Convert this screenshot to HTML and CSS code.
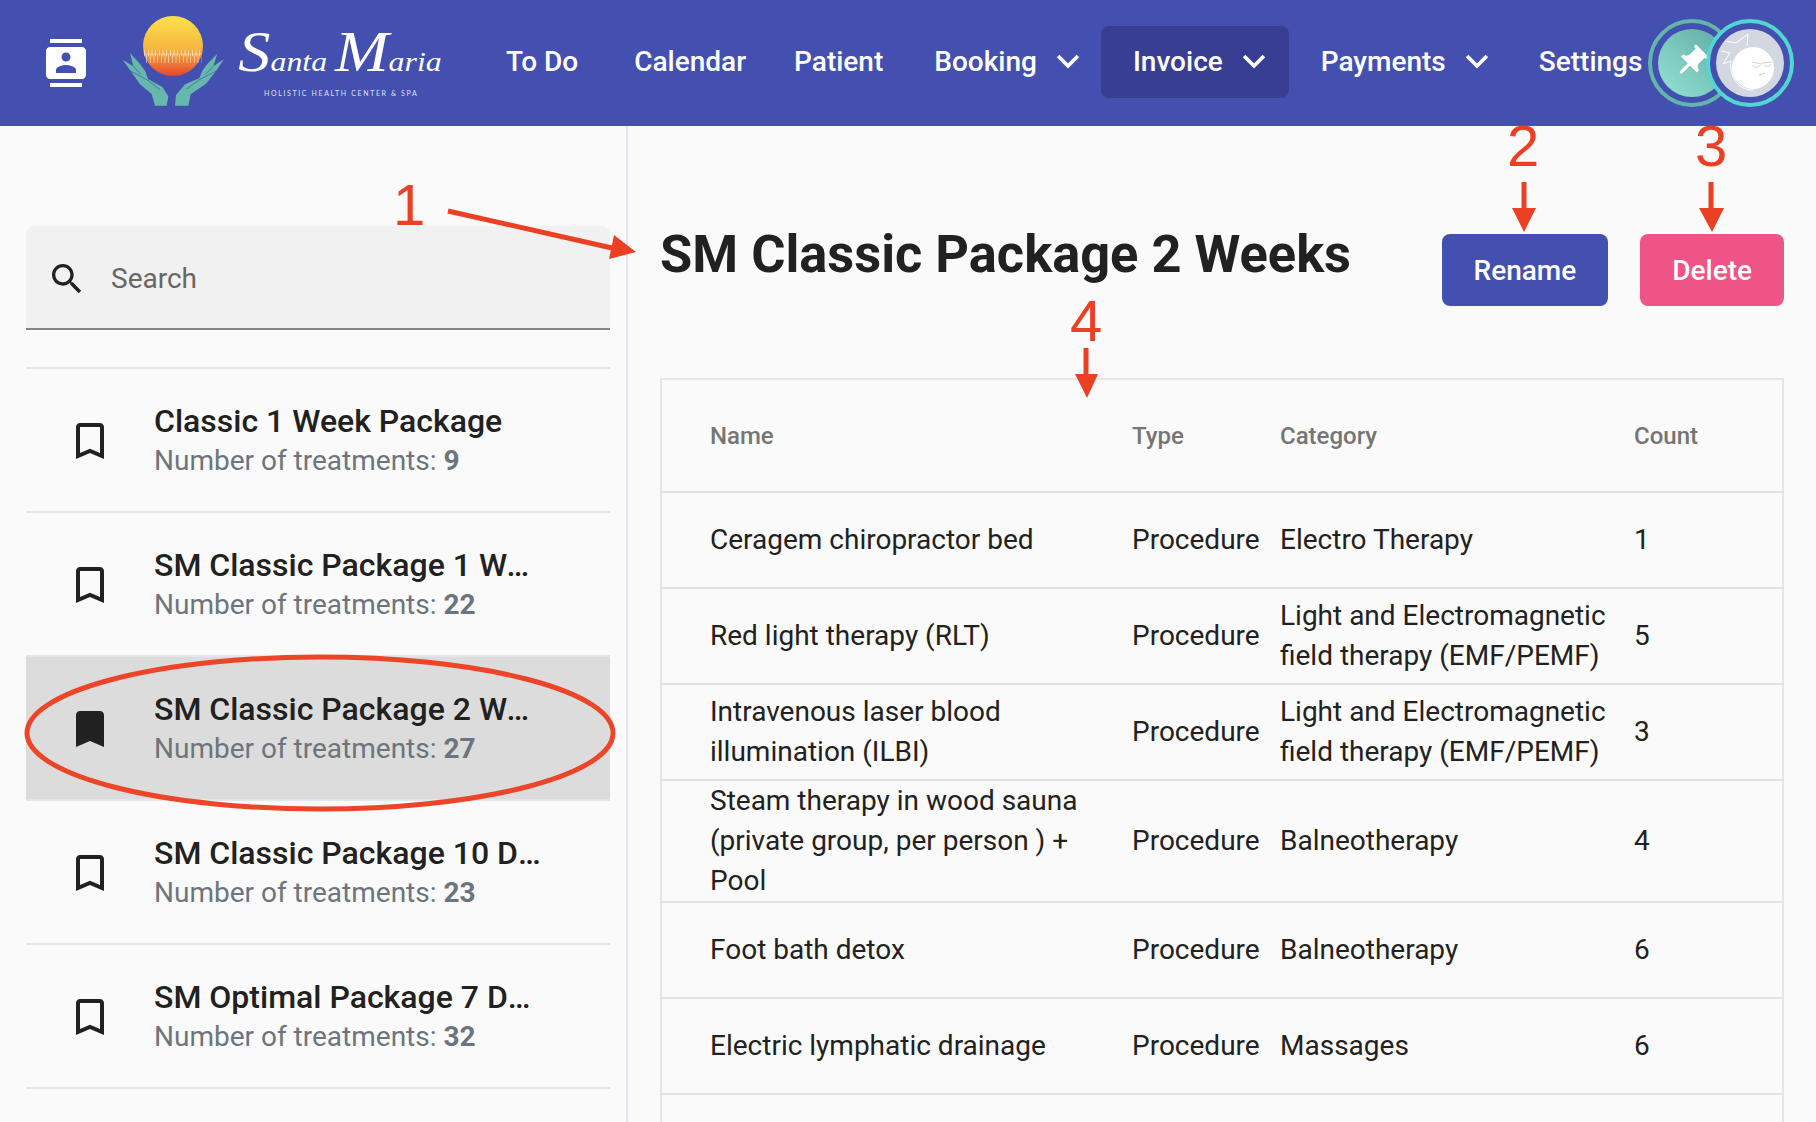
FILE: index.html
```html
<!DOCTYPE html>
<html lang="en">

<head>
  <meta charset="UTF-8">
  <meta name="viewport" content="width=device-width, initial-scale=1.0">
  <title>Santa Maria - Invoice</title>
  <link rel="stylesheet" href="styles.css">
</head>

<body>
  <header class="topbar">
    <svg class="menu-icon" viewBox="0 0 24 24">
      <path d="M20 0H4v2h16V0zM4 24h16v-2H4v2zM20 4H4c-1.1 0-2 .9-2 2v12c0 1.1.9 2 2 2h16c1.1 0 2-.9 2-2V6c0-1.1-.9-2-2-2zm-8 2.75c1.24 0 2.25 1.01 2.25 2.25s-1.01 2.25-2.25 2.25S9.75 10.24 9.75 9 10.76 6.75 12 6.75zM17 17H7v-1.5c0-1.67 3.33-2.5 5-2.5s5 .83 5 2.5V17z" />
    </svg>

    <svg class="logo" viewBox="0 0 1020 315">
      <defs>
        <linearGradient id="sun" x1="0" y1="0" x2="0" y2="1">
          <stop offset="0" stop-color="#fbe24c" />
          <stop offset="0.55" stop-color="#f5b53f" />
          <stop offset="1" stop-color="#e6452f" />
        </linearGradient>
      </defs>
      <circle cx="159" cy="111" r="90" fill="url(#sun)" />
      <path d="M73 132H245" stroke="#fff" stroke-width="20" stroke-dasharray="2 9" opacity=".8" fill="none" />
      <path d="M73 150H245" stroke="#fff" stroke-width="24" stroke-dasharray="2 9" stroke-dashoffset="5" opacity=".7" fill="none" />
      <path d="M73 135H245" stroke="#fff" stroke-width="2" opacity=".8" fill="none" />
      <path fill="#66b8ad" d="M8 152 40 172 30 132 60 165 75 185 84 210 128 235 145 262 140 290H105L95 255 60 226 32 186Z" />
      <path fill="#66b8ad" d="M312 150 280 172 292 134 262 165 247 185 238 208 195 226 168 258 165 290H205L212 256 258 224 288 186Z" />
      <path fill="none" stroke="#4350af" stroke-width="2" d="M40 172 62 196M32 186 84 214 120 242M280 172 256 196M288 186 238 212 200 240" />
      <text class="logo-script" x="355" y="186" textLength="610" lengthAdjust="spacingAndGlyphs"><tspan class="logo-cap">S</tspan>anta <tspan class="logo-cap">M</tspan>aria</text>
      <text class="logo-tag" x="432" y="262" textLength="458" lengthAdjust="spacing">HOLISTIC HEALTH CENTER &amp; SPA</text>
    </svg>

    <nav class="nav">
      <a class="nav-link">To Do</a>
      <a class="nav-link calendar">Calendar</a>
      <a class="nav-link">Patient</a>
      <a class="nav-link booking">Booking
        <svg class="chevron" viewBox="0 0 24 24"><path d="M5 8.5 12 15.5 19 8.5" /></svg>
      </a>
      <a class="nav-link active">Invoice
        <svg class="chevron" viewBox="0 0 24 24"><path d="M5 8.5 12 15.5 19 8.5" /></svg>
      </a>
      <a class="nav-link payments">Payments
        <svg class="chevron" viewBox="0 0 24 24"><path d="M5 8.5 12 15.5 19 8.5" /></svg>
      </a>
      <a class="nav-link settings">Settings</a>
    </nav>

    <div class="avatars">
      <div class="avatar avatar-pin">
        <svg viewBox="0 0 68 68">
          <defs>
            <linearGradient id="teal" x1="1" y1="0" x2="0" y2="1">
              <stop offset="0" stop-color="#5fa9a2" />
              <stop offset="1" stop-color="#95e4d6" />
            </linearGradient>
          </defs>
          <circle cx="34" cy="34" r="34" fill="url(#teal)" />
          <path fill="#fff" transform="translate(14 14) scale(1.6) rotate(45 12 12)" d="M16 9V4h1c.55 0 1-.45 1-1s-.45-1-1-1H7c-.55 0-1 .45-1 1s.45 1 1 1h1v5c0 1.66-1.34 3-3 3v2h5.97v7l1 1 1-1v-7H19v-2c-1.66 0-3-1.34-3-3z" />
        </svg>
      </div>
      <div class="avatar avatar-user">
        <svg viewBox="0 0 68 68">
          <circle cx="34" cy="34" r="34" fill="#d3d8e0" />
          <path fill="none" stroke="#fff" stroke-width="1" d="M9 12 20 14 28 8 32 5 31 17 M5 22 14 24 7 35 15 32 M15 32C13 50 24 62 38 61" />
          <circle cx="37" cy="39" r="21" fill="#fff" />
          <path fill="none" stroke="#c9ced6" stroke-width="1" d="M36 33 46 35 M37 36C38 39 43 39 44 36 M46 34 56 33 M48 36C49 38 54 38 55 35 M43 46 49 44" />
        </svg>
      </div>
    </div>
  </header>

  <main class="page">
    <aside class="sidebar">
      <div class="search">
        <svg class="search-icon" viewBox="0 0 24 24">
          <path d="M15.5 14h-.79l-.28-.27C15.41 12.59 16 11.11 16 9.5 16 5.91 13.09 3 9.5 3S3 5.91 3 9.5 5.91 16 9.5 16c1.61 0 3.09-.59 4.23-1.57l.27.28v.79l5 4.99L20.49 19l-4.99-5zm-6 0C7.01 14 5 11.99 5 9.5S7.01 5 9.5 5 14 7.01 14 9.5 11.99 14 9.5 14z" />
        </svg>
        <span class="search-text">Search</span>
      </div>

      <ul class="packages">
        <li class="package">
          <svg class="bookmark" viewBox="0 0 24 24"><path d="M17 3H7c-1.1 0-2 .9-2 2v16l7-3 7 3V5c0-1.1-.9-2-2-2zm0 15l-5-2.18L7 18V5h10v13z" /></svg>
          <div class="package-text">
            <div class="package-name">Classic 1 Week Package</div>
            <div class="package-count">Number of treatments: <b>9</b></div>
          </div>
        </li>
        <li class="package">
          <svg class="bookmark" viewBox="0 0 24 24"><path d="M17 3H7c-1.1 0-2 .9-2 2v16l7-3 7 3V5c0-1.1-.9-2-2-2zm0 15l-5-2.18L7 18V5h10v13z" /></svg>
          <div class="package-text">
            <div class="package-name">SM Classic Package 1 Week</div>
            <div class="package-count">Number of treatments: <b>22</b></div>
          </div>
        </li>
        <li class="package selected">
          <svg class="bookmark" viewBox="0 0 24 24"><path d="M17 3H7c-1.1 0-2 .9-2 2v16l7-3 7 3V5c0-1.1-.9-2-2-2z" /></svg>
          <div class="package-text">
            <div class="package-name">SM Classic Package 2 Weeks</div>
            <div class="package-count">Number of treatments: <b>27</b></div>
          </div>
        </li>
        <li class="package">
          <svg class="bookmark" viewBox="0 0 24 24"><path d="M17 3H7c-1.1 0-2 .9-2 2v16l7-3 7 3V5c0-1.1-.9-2-2-2zm0 15l-5-2.18L7 18V5h10v13z" /></svg>
          <div class="package-text">
            <div class="package-name">SM Classic Package 10 Days</div>
            <div class="package-count">Number of treatments: <b>23</b></div>
          </div>
        </li>
        <li class="package">
          <svg class="bookmark" viewBox="0 0 24 24"><path d="M17 3H7c-1.1 0-2 .9-2 2v16l7-3 7 3V5c0-1.1-.9-2-2-2zm0 15l-5-2.18L7 18V5h10v13z" /></svg>
          <div class="package-text">
            <div class="package-name">SM Optimal Package 7 Days</div>
            <div class="package-count">Number of treatments: <b>32</b></div>
          </div>
        </li>
      </ul>
    </aside>

    <section class="content">
      <div class="content-head">
        <h1 class="title">SM Classic Package 2 Weeks</h1>
        <div class="actions">
          <button class="btn btn-rename">Rename</button>
          <button class="btn btn-delete">Delete</button>
        </div>
      </div>

      <table class="treatments">
        <colgroup>
          <col class="col-name">
          <col class="col-type">
          <col class="col-category">
          <col>
        </colgroup>
        <thead>
          <tr>
            <th>Name</th>
            <th>Type</th>
            <th>Category</th>
            <th>Count</th>
          </tr>
        </thead>
        <tbody>
          <tr>
            <td>Ceragem chiropractor bed</td>
            <td>Procedure</td>
            <td>Electro Therapy</td>
            <td>1</td>
          </tr>
          <tr>
            <td>Red light therapy (RLT)</td>
            <td>Procedure</td>
            <td>Light and Electromagnetic field therapy (EMF/PEMF)</td>
            <td>5</td>
          </tr>
          <tr>
            <td>Intravenous laser blood illumination (ILBI)</td>
            <td>Procedure</td>
            <td>Light and Electromagnetic field therapy (EMF/PEMF)</td>
            <td>3</td>
          </tr>
          <tr>
            <td>Steam therapy in wood sauna (private group, per person ) + Pool</td>
            <td>Procedure</td>
            <td>Balneotherapy</td>
            <td>4</td>
          </tr>
          <tr>
            <td>Foot bath detox</td>
            <td>Procedure</td>
            <td>Balneotherapy</td>
            <td>6</td>
          </tr>
          <tr>
            <td>Electric lymphatic drainage</td>
            <td>Procedure</td>
            <td>Massages</td>
            <td>6</td>
          </tr>
          <tr>
            <td></td>
            <td></td>
            <td></td>
            <td></td>
          </tr>
        </tbody>
      </table>
    </section>
  </main>

  <!-- red callouts drawn on top of the screenshot -->
  <svg class="callouts" viewBox="0 0 1816 1122">
    <text x="393" y="225">1</text>
    <text x="1507" y="166">2</text>
    <text x="1695" y="166">3</text>
    <text x="1070" y="341">4</text>
    <path class="shaft" d="M448 211 612 248" />
    <path class="head" d="M614 235 636 252 609 259Z" />
    <path class="shaft" d="M1524 182V210" />
    <path class="head" d="M1512 208H1536L1524 232Z" />
    <path class="shaft" d="M1711 182V210" />
    <path class="head" d="M1699 208H1724L1712 232Z" />
    <path class="shaft" d="M1086 348V376" />
    <path class="head" d="M1075 374H1098L1087 398Z" />
    <ellipse class="ring" cx="320" cy="733" rx="293" ry="76" />
  </svg>
</body>

</html>
```

FILE: styles.css
```css
* {
  margin: 0;
  padding: 0;
  box-sizing: border-box;
  list-style: none;
}

html,
body {
  height: 100%;
  overflow: hidden;
}

body {
  position: relative;
  display: flex;
  flex-direction: column;
  background: #fafafa;
  color: #212121;
  font-family: Roboto, "Liberation Sans", sans-serif;
}

/* top bar */
.topbar {
  flex: none;
  display: flex;
  align-items: center;
  height: 126px;
  padding-left: 42px;
  background: #4350af;
}

.menu-icon {
  flex: none;
  width: 48px;
  height: 48px;
  fill: #fff;
}

.logo {
  flex: none;
  width: 340px;
  height: 105px;
  margin-left: 30px;
  margin-top: -3px;
}

.logo-script {
  font-family: "Liberation Serif", serif;
  font-style: italic;
  font-size: 84px;
  fill: #fff;
}

.logo-cap {
  font-size: 170px;
}

.logo-tag {
  font-family: Lato, sans-serif;
  font-size: 21px;
  fill: #dfe3f5;
}

.nav {
  display: flex;
  align-items: center;
  margin-left: 22px;
  margin-bottom: 2px;
}

.nav-link {
  display: flex;
  align-items: center;
  height: 72px;
  padding: 0 24px 2px;
  border-radius: 8px;
  color: #fff;
  font-size: 28px;
  font-weight: 500;
  white-space: nowrap;
}

.calendar {
  margin-left: 8px;
}

.booking {
  margin-left: 3px;
  padding-right: 16px;
}

.active {
  padding: 0 18px 2px 32px;
  background: #383f92;
}

.payments {
  padding-left: 32px;
  padding-right: 21px;
}

.settings {
  padding-right: 0;
}

.chevron {
  width: 34px;
  height: 34px;
  margin-left: 14px;
  fill: none;
  stroke: #fff;
  stroke-width: 2.6;
}

.avatars {
  display: flex;
  margin-left: 6px;
}

.avatar {
  flex: none;
  width: 88px;
  height: 88px;
  padding: 6px;
  border: 4px solid;
  border-radius: 50%;
  background: #4350af;
}

.avatar svg {
  display: block;
  width: 68px;
  height: 68px;
}

.avatar-pin {
  border-color: #62b5a9;
}

.avatar-user {
  position: relative;
  margin-left: -30px;
  border-color: #52d6d0;
}

/* page */
.page {
  flex: 1;
  display: flex;
  min-height: 0;
}

.sidebar {
  flex: none;
  width: 628px;
  padding: 100px 16px 0 26px;
  border-right: 2px solid #e1e4ea;
}

.search {
  display: flex;
  align-items: center;
  gap: 24px;
  height: 104px;
  padding: 2px 0 0 21px;
  border-bottom: 2px solid #858585;
  border-radius: 8px 8px 0 0;
  background: #f1f1f1;
}

.search-icon {
  width: 40px;
  height: 40px;
  margin-top: 2px;
  fill: #212121;
}

.search-text {
  color: #666;
  font-size: 28px;
}

.packages {
  margin-top: 37px;
  border-top: 2px solid #e3e6ea;
}

.package {
  display: flex;
  align-items: center;
  gap: 40px;
  height: 144px;
  padding-left: 40px;
  border-bottom: 2px solid #e3e6ea;
}

.selected {
  background: #dcdcdc;
}

.bookmark {
  flex: none;
  width: 48px;
  height: 48px;
  margin-top: 2px;
  fill: #212121;
}

.package-text {
  min-width: 0;
  padding-top: 2px;
}

.package-name {
  width: 392px;
  overflow: hidden;
  font-size: 32px;
  font-weight: 500;
  line-height: 40px;
  white-space: nowrap;
  text-overflow: ellipsis;
}

.package-count {
  color: #6c757d;
  font-size: 28px;
  line-height: 40px;
}

.package-count b {
  font-weight: 700;
}

/* right side */
.content {
  flex: 1;
  min-width: 0;
  padding: 100px 32px 0;
}

.content-head {
  display: flex;
  justify-content: space-between;
  height: 80px;
  margin-bottom: 72px;
}

.title {
  font-size: 52.4px;
  font-weight: 700;
  line-height: 56px;
}

.actions {
  display: flex;
  gap: 32px;
  margin-top: 8px;
}

.btn {
  height: 72px;
  padding: 0 32px;
  border: none;
  border-radius: 8px;
  color: #fff;
  font-family: inherit;
  font-size: 28px;
  font-weight: 500;
}

.btn-rename {
  background: #4350af;
}

.btn-delete {
  background: #ee5586;
}

.treatments {
  width: 100%;
  border-collapse: collapse;
  table-layout: fixed;
  border: 2px solid #e3e6ea;
  font-size: 28px;
  line-height: 40px;
}

.col-name {
  width: 471px;
}

.col-type {
  width: 148px;
}

.col-category {
  width: 354px;
}

.treatments th {
  height: 113px;
  color: #757575;
  font-size: 24px;
  font-weight: 500;
  text-align: left;
}

.treatments td {
  height: 96px;
  border-top: 2px solid #e3e3e3;
}

.treatments tbody tr:nth-child(4) td {
  height: 122px;
}

.treatments th:first-child,
.treatments td:first-child {
  padding: 0 20px 0 48px;
}

.treatments td:nth-child(3) {
  padding-right: 8px;
}

/* annotations */
.callouts {
  position: absolute;
  top: 0;
  left: 0;
  width: 1816px;
  height: 1122px;
  pointer-events: none;
}

.callouts text {
  fill: #ec4024;
  font-family: "Liberation Sans", sans-serif;
  font-size: 58px;
}

.shaft {
  fill: none;
  stroke: #ec4024;
  stroke-width: 5px;
}

.head {
  fill: #ec4024;
}

.ring {
  fill: none;
  stroke: #ec4527;
  stroke-width: 5px;
}
```
